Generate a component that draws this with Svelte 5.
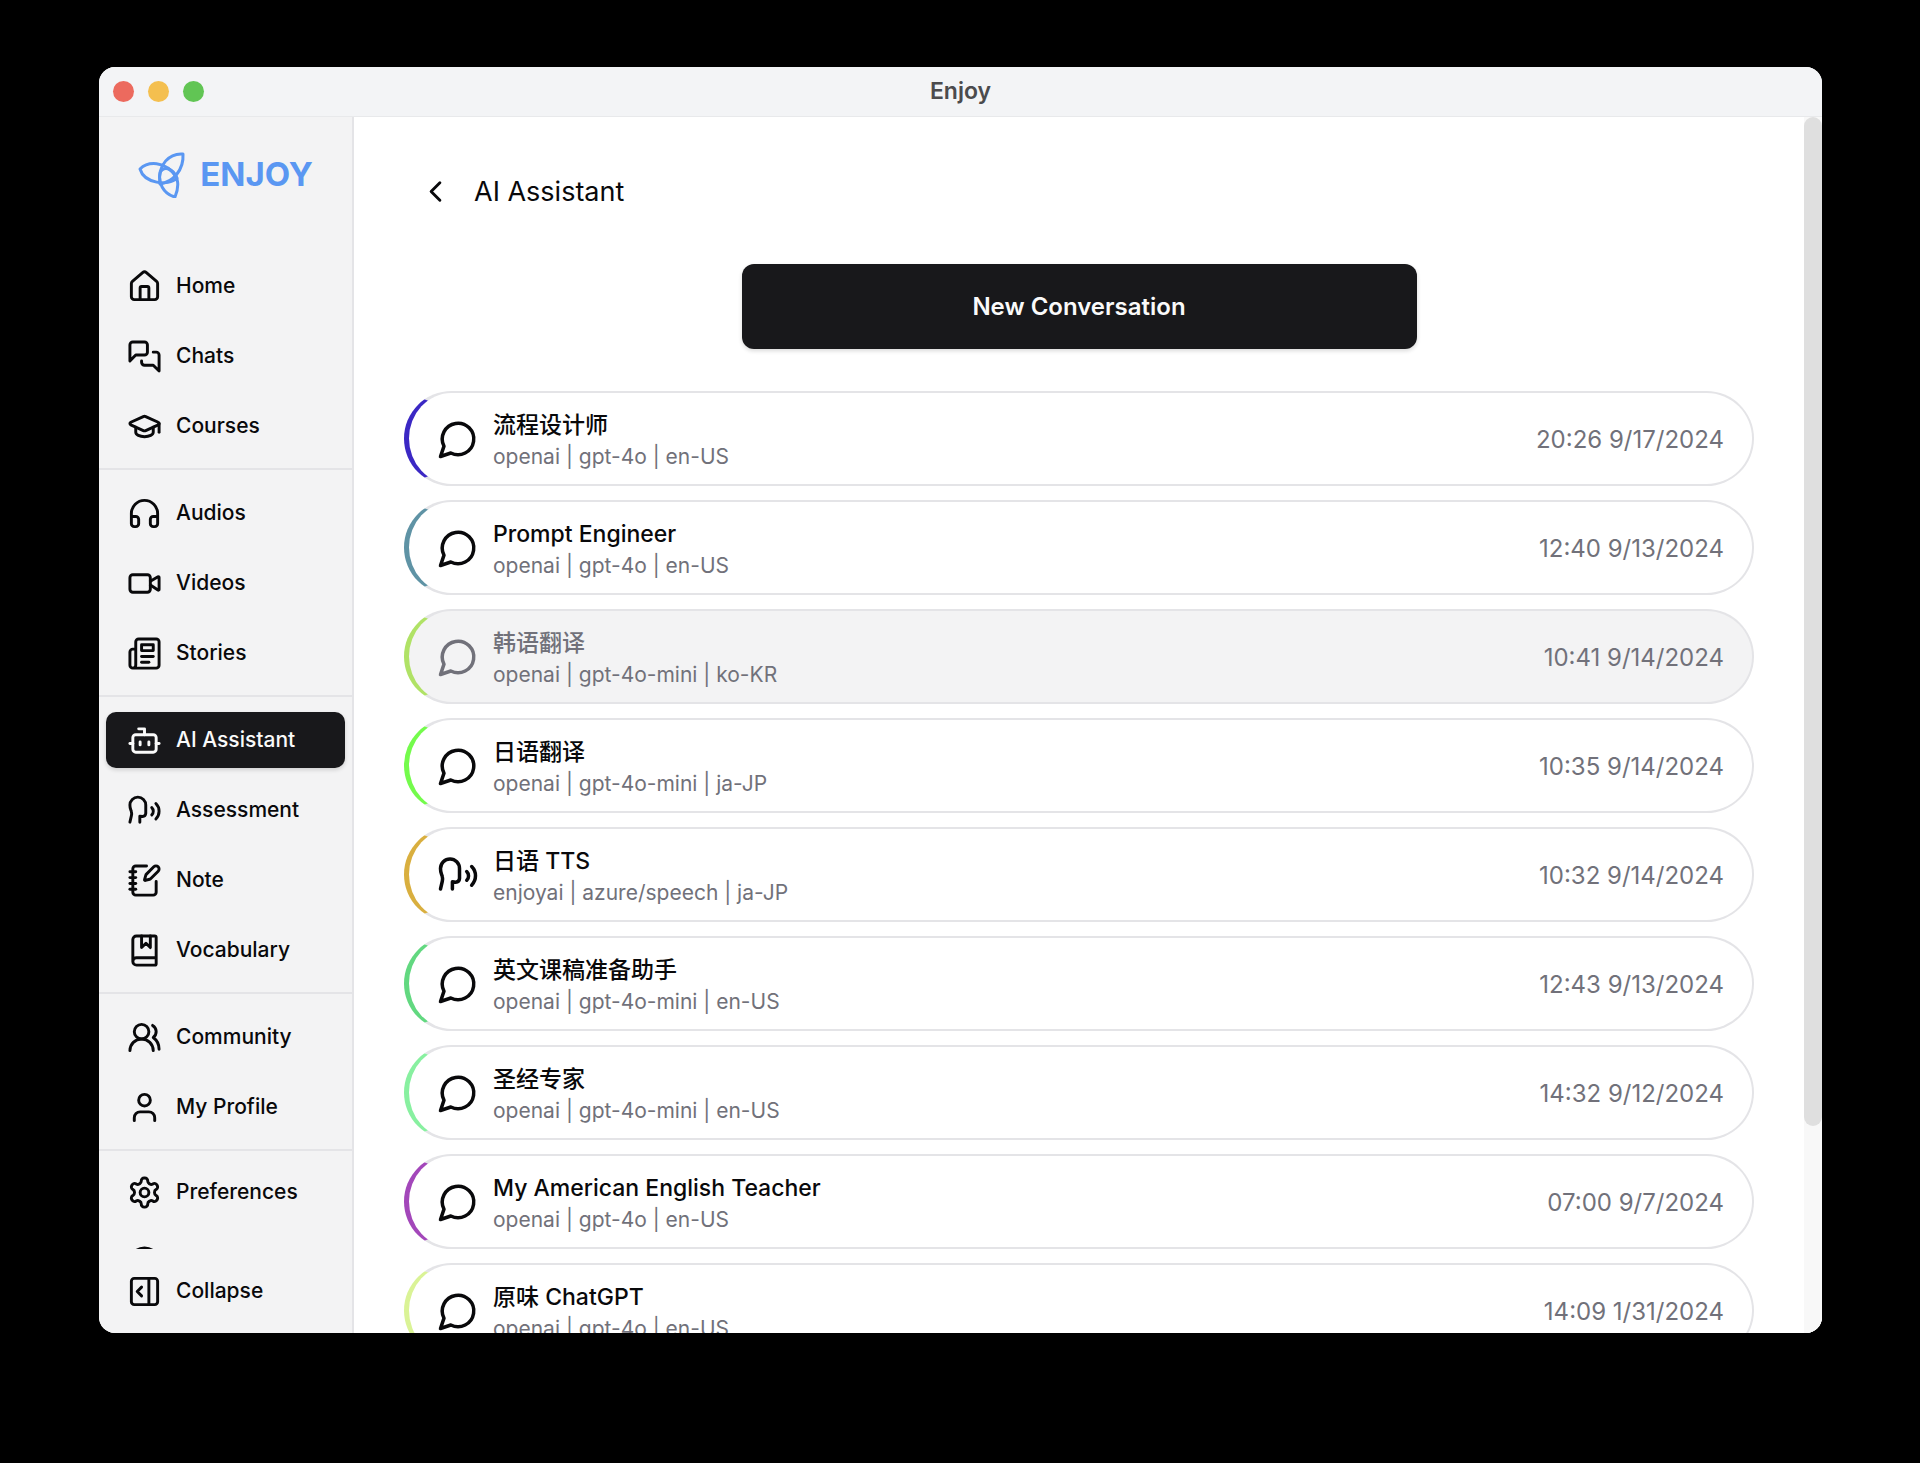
<script>
  const icons = {
    home: ['M15 21v-8a1 1 0 0 0-1-1h-4a1 1 0 0 0-1 1v8', 'M3 10a2 2 0 0 1 .709-1.528l7-5.999a2 2 0 0 1 2.582 0l7 5.999A2 2 0 0 1 21 10v9a2 2 0 0 1-2 2H5a2 2 0 0 1-2-2z'],
    chats: ['M14 9a2 2 0 0 1-2 2H6l-4 4V4a2 2 0 0 1 2-2h8a2 2 0 0 1 2 2z', 'M18 9h2a2 2 0 0 1 2 2v11l-4-4h-6a2 2 0 0 1-2-2v-1'],
    courses: ['M21.42 10.922a1 1 0 0 0-.019-1.838L12.83 5.18a2 2 0 0 0-1.66 0L2.6 9.08a1 1 0 0 0 0 1.832l8.57 3.908a2 2 0 0 0 1.66 0z', 'M22 10v6', 'M6 12.5V16a6 3 0 0 0 12 0v-3.5'],
    audios: ['M3 14h3a2 2 0 0 1 2 2v3a2 2 0 0 1-2 2H5a2 2 0 0 1-2-2v-7a9 9 0 0 1 18 0v7a2 2 0 0 1-2 2h-1a2 2 0 0 1-2-2v-3a2 2 0 0 1 2-2h3'],
    videos: ['m16 13 5.223 3.482a.5.5 0 0 0 .777-.416V7.87a.5.5 0 0 0-.752-.432L16 10.5', 'M4 6h10a2 2 0 0 1 2 2v8a2 2 0 0 1-2 2H4a2 2 0 0 1-2-2V8a2 2 0 0 1 2-2z'],
    stories: ['M4 22h16a2 2 0 0 0 2-2V4a2 2 0 0 0-2-2H8a2 2 0 0 0-2 2v16a2 2 0 0 1-2 2Zm0 0a2 2 0 0 1-2-2v-9c0-1.1.9-2 2-2h2', 'M18 14h-8', 'M15 18h-5', 'M10 6h8v4h-8V6Z'],
    assistant: ['M12 8V4H8', 'M6 8h12a2 2 0 0 1 2 2v8a2 2 0 0 1-2 2H6a2 2 0 0 1-2-2v-8a2 2 0 0 1 2-2z', 'M2 14h2', 'M20 14h2', 'M15 13v2', 'M9 13v2'],
    speech: ['M8.8 20v-4.1l1.9.2a2.3 2.3 0 0 0 2.164-2.1V8.3A5.37 5.37 0 0 0 2 8.25c0 2.8.656 3.054 1 4.55a5.77 5.77 0 0 1 .029 2.758L2 20', 'M19.8 17.8a7.5 7.5 0 0 0 .003-10.603', 'M17 15a3.5 3.5 0 0 0-.025-4.975'],
    note: ['M13.4 2H6a2 2 0 0 0-2 2v16a2 2 0 0 0 2 2h12a2 2 0 0 0 2-2v-7.4', 'M2 6h4', 'M2 10h4', 'M2 14h4', 'M2 18h4', 'M21.378 5.626a1 1 0 1 0-3.004-3.004l-5.01 5.012a2 2 0 0 0-.506.854l-.837 2.87a.5.5 0 0 0 .62.62l2.87-.837a2 2 0 0 0 .854-.506z'],
    vocabulary: ['M10 2v8l3-3 3 3V2', 'M4 19.5v-15A2.5 2.5 0 0 1 6.5 2H19a1 1 0 0 1 1 1v18a1 1 0 0 1-1 1H6.5a1 1 0 0 1 0-5H20'],
    community: ['M18 21a8 8 0 0 0-16 0', 'M15 8a5 5 0 1 1-10 0a5 5 0 0 1 10 0', 'M22 20c0-3.37-2-6.5-4-8a5 5 0 0 0-.45-8.3'],
    profile: ['M19 21v-2a4 4 0 0 0-4-4H9a4 4 0 0 0-4 4v2', 'M16 7a4 4 0 1 1-8 0a4 4 0 0 1 8 0'],
    preferences: ['M12.22 2h-.44a2 2 0 0 0-2 2v.18a2 2 0 0 1-1 1.73l-.43.25a2 2 0 0 1-2 0l-.15-.08a2 2 0 0 0-2.73.73l-.22.38a2 2 0 0 0 .73 2.73l.15.1a2 2 0 0 1 1 1.72v.51a2 2 0 0 1-1 1.74l-.15.09a2 2 0 0 0-.73 2.73l.22.38a2 2 0 0 0 2.73.73l.15-.08a2 2 0 0 1 2 0l.43.25a2 2 0 0 1 1 1.73V20a2 2 0 0 0 2 2h.44a2 2 0 0 0 2-2v-.18a2 2 0 0 1 1-1.73l.43-.25a2 2 0 0 1 2 0l.15.08a2 2 0 0 0 2.73-.73l.22-.39a2 2 0 0 0-.73-2.73l-.15-.08a2 2 0 0 1-1-1.74v-.5a2 2 0 0 1 1-1.74l.15-.09a2 2 0 0 0 .73-2.73l-.22-.38a2 2 0 0 0-2.73-.73l-.15.08a2 2 0 0 1-2 0l-.43-.25a2 2 0 0 1-1-1.73V4a2 2 0 0 0-2-2z', 'M15 12a3 3 0 1 1-6 0a3 3 0 0 1 6 0'],
    help: ['M22 12a10 10 0 1 1-20 0a10 10 0 0 1 20 0', 'M9.09 9a3 3 0 0 1 5.83 1c0 2-3 3-3 3', 'M12 17h.01'],
    collapse: ['M5 3h14a2 2 0 0 1 2 2v14a2 2 0 0 1-2 2H5a2 2 0 0 1-2-2V5a2 2 0 0 1 2-2z', 'M15 3v18', 'm10 15-3-3 3-3'],
    chat: ['M7.9 20A9 9 0 1 0 4 16.1L2 22Z'],
    back: ['m15 18-6-6 6-6']
  };

  const groups = [
    [['home', 'Home'], ['chats', 'Chats'], ['courses', 'Courses']],
    [['audios', 'Audios'], ['videos', 'Videos'], ['stories', 'Stories']],
    [['assistant', 'AI Assistant'], ['speech', 'Assessment'], ['note', 'Note'], ['vocabulary', 'Vocabulary']],
    [['community', 'Community'], ['profile', 'My Profile']],
    [['preferences', 'Preferences'], ['help', '']]
  ];

  const conversations = [
    { title: '流程设计师', meta: 'openai | gpt-4o | en-US', time: '20:26 9/17/2024', color: '#3b28c4' },
    { title: 'Prompt Engineer', meta: 'openai | gpt-4o | en-US', time: '12:40 9/13/2024', color: '#5f93a5' },
    { title: '韩语翻译', meta: 'openai | gpt-4o-mini | ko-KR', time: '10:41 9/14/2024', color: '#b0e266', muted: true },
    { title: '日语翻译', meta: 'openai | gpt-4o-mini | ja-JP', time: '10:35 9/14/2024', color: '#74fb4c' },
    { title: '日语 TTS', meta: 'enjoyai | azure/speech | ja-JP', time: '10:32 9/14/2024', color: '#d9af3f', icon: 'speech' },
    { title: '英文课稿准备助手', meta: 'openai | gpt-4o-mini | en-US', time: '12:43 9/13/2024', color: '#62d880' },
    { title: '圣经专家', meta: 'openai | gpt-4o-mini | en-US', time: '14:32 9/12/2024', color: '#88f0a0' },
    { title: 'My American English Teacher', meta: 'openai | gpt-4o | en-US', time: '07:00 9/7/2024', color: '#a347ba' },
    { title: '原味 ChatGPT', meta: 'openai | gpt-4o | en-US', time: '14:09 1/31/2024', color: '#daf396' }
  ];
</script>

{#snippet icon(name)}
  <svg class="icon" viewBox="0 0 24 24" aria-hidden="true">
    {#each icons[name] as d}<path {d} />{/each}
  </svg>
{/snippet}

<div class="desktop">
  <div class="window">
    <header class="titlebar">
      <div class="lights">
        <button class="light red" aria-label="Close"></button>
        <button class="light yellow" aria-label="Minimize"></button>
        <button class="light green" aria-label="Zoom"></button>
      </div>
      <span class="window-title">Enjoy</span>
    </header>

    <div class="body">
      <aside class="sidebar">
        <div class="brand">
          <svg class="logo" viewBox="0 0 48 48" aria-hidden="true">
            <path d="M2 19C9 12 27 9 39 28C30 37 6 33 2 19Z" />
            <path d="M45 4C32 3 19 14 22 34C35 32 46 20 45 4Z" />
            <path d="M37 47C25 44 20 32 22 23C27 11 47 24 37 47Z" />
          </svg>
          <span>ENJOY</span>
        </div>
        <nav class="nav">
          {#each groups as group}
            <div class="group">
              {#each group as [name, label]}
                <a class="item" class:active={name === 'assistant'} href="#{name}" aria-label={label || name}>
                  {@render icon(name)}<span>{label}</span>
                </a>
              {/each}
            </div>
          {/each}
        </nav>
        <div class="foot">
          <button class="item">{@render icon('collapse')}<span>Collapse</span></button>
        </div>
      </aside>

      <main class="main">
        <div class="content">
          <div class="heading">
            <button class="back" aria-label="Back">{@render icon('back')}</button>
            <h1>AI Assistant</h1>
          </div>
          <button class="new">New Conversation</button>
          <div class="list">
            {#each conversations as c}
              <a class="card" class:muted={c.muted} href="#conversation" style:border-left-color={c.color}>
                {@render icon(c.icon ?? 'chat')}
                <div class="text">
                  <div class="title">{c.title}</div>
                  <div class="meta">{c.meta}</div>
                </div>
                <time>{c.time}</time>
              </a>
            {/each}
          </div>
        </div>
        <div class="track"><div class="thumb"></div></div>
      </main>
    </div>
  </div>
</div>

<style>
  :global(body) {
    background: #000;
  }
  .desktop {
    box-sizing: border-box;
    height: 100vh;
    padding: 67px 98px 130px 99px;
    font-family: Inter, 'Noto Sans CJK SC', sans-serif;
    color: #09090b;
  }
  .window {
    height: 100%;
    display: flex;
    flex-direction: column;
    border-radius: 16px;
    overflow: hidden;
    background: #fff;
  }
  button {
    font: inherit;
    color: inherit;
    border: 0;
    padding: 0;
    background: none;
  }
  a {
    color: inherit;
    text-decoration: none;
  }
  .icon {
    flex: none;
    width: 35px;
    height: 35px;
    fill: none;
    stroke: currentColor;
    stroke-width: 2;
    stroke-linecap: round;
    stroke-linejoin: round;
  }
  .titlebar {
    flex: none;
    height: 49px;
    display: grid;
    grid-template-columns: 1fr auto 1fr;
    align-items: center;
    background: #f3f4f6;
    border-bottom: 1px solid #e8e9eb;
  }
  .lights {
    display: flex;
    gap: 14px;
    padding-left: 14px;
  }
  .light {
    width: 21px;
    height: 21px;
    border-radius: 50%;
  }
  .red { background: #ec6a5e; }
  .yellow { background: #f4bf4f; }
  .green { background: #61c554; }
  .window-title {
    padding-bottom: 2px;
    font-size: 23px;
    line-height: 28px;
    font-weight: 600;
    color: #4b4b4d;
  }
  .body {
    flex: 1;
    min-height: 0;
    display: flex;
  }
  .sidebar {
    flex: none;
    width: 253px;
    display: flex;
    flex-direction: column;
    background: #f3f3f4;
    border-right: 2px solid #e4e4e7;
  }
  .brand {
    flex: none;
    height: 114px;
    display: flex;
    align-items: center;
    justify-content: center;
    gap: 14px;
    font-size: 33px;
    line-height: 48px;
    font-weight: 700;
    color: #5a97f2;
  }
  .logo {
    width: 48px;
    height: 48px;
    fill: none;
    stroke: currentColor;
    stroke-width: 3;
    stroke-linejoin: round;
  }
  .nav {
    flex: 1;
    min-height: 0;
    overflow: hidden;
    padding-top: 12px;
  }
  .group {
    display: flex;
    flex-direction: column;
    gap: 14px;
    padding: 15px 7px 14px;
    border-bottom: 2px solid #e4e4e7;
  }
  .group:last-child {
    padding-top: 13px;
  }
  .item {
    box-sizing: border-box;
    width: 100%;
    height: 56px;
    display: flex;
    align-items: center;
    gap: 14px;
    padding: 0 21px;
    border-radius: 10px;
    font-size: 21px;
    line-height: 28px;
    font-weight: 500;
  }
  .active {
    background: #18181b;
    color: #fafafa;
    box-shadow: 0 2px 4px rgb(0 0 0 / 0.15);
  }
  .foot {
    flex: none;
    padding: 14px 7px;
  }
  .main {
    flex: 1;
    min-width: 0;
    display: flex;
    background: #fff;
  }
  .content {
    flex: 1;
    min-width: 0;
    overflow: hidden;
    padding: 0 50px;
    display: flex;
    flex-direction: column;
  }
  .heading {
    flex: none;
    display: flex;
    align-items: center;
    gap: 21px;
    padding: 47px 0 45px 14px;
  }
  .back {
    display: flex;
    padding: 10px 0;
  }
  h1 {
    margin: 0;
    font-size: 27px;
    line-height: 40px;
    font-weight: 400;
  }
  .new {
    flex: none;
    align-self: center;
    width: 50%;
    height: 85px;
    border-radius: 12px;
    background: #18181b;
    color: #fafafa;
    font-size: 24px;
    font-weight: 600;
    box-shadow: 0 2px 4px rgb(0 0 0 / 0.15);
  }
  .list {
    display: flex;
    flex-direction: column;
    gap: 14px;
    padding-top: 42px;
  }
  .card {
    display: flex;
    align-items: center;
    gap: 14px;
    padding: 14px 28px 13px;
    border: 2px solid #e4e4e7;
    border-left-width: 5px;
    border-radius: 999px;
  }
  .card .icon {
    width: 42px;
    height: 42px;
  }
  .muted {
    background: #f3f3f4;
    color: #71717a;
  }
  .text {
    flex: 1;
    min-width: 0;
  }
  .title {
    font-size: 23px;
    line-height: 36px;
    font-weight: 500;
  }
  .meta {
    font-size: 21px;
    line-height: 28px;
    color: #71717a;
  }
  time {
    font-size: 24px;
    line-height: 35px;
    color: #71717a;
  }
  .track {
    flex: none;
    width: 18px;
    background: #f8f8f8;
  }
  .thumb {
    height: 83%;
    border-radius: 9px;
    background: #dfdfdf;
  }
</style>
